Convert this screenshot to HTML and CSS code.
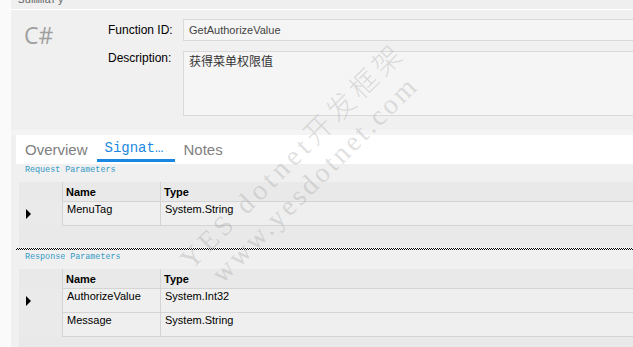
FILE: index.html
```html
<!DOCTYPE html>
<html lang="zh">
<head>
  <meta charset="UTF-8">
  <title>Function Signature</title>
  <link rel="stylesheet" href="styles.css">
</head>
<body>
  <div class="app">
    <div class="summary">
      <div class="group-title"><span>Summary</span></div>
      <div class="summary-body">
        <div class="lang">C#</div>
        <div class="fields">
          <label class="field-label center">Function ID:</label>
          <div class="box">GetAuthorizeValue</div>
          <label class="field-label">Description:</label>
          <div class="box area">获得菜单权限值</div>
        </div>
      </div>
    </div>

    <div class="lower">
      <div class="tabs">
        <div class="tab">Overview</div>
        <div class="tab active">Signat…</div>
        <div class="tab">Notes</div>
      </div>

      <div class="section-label">Request Parameters</div>
      <div class="grid request">
        <div class="row head">
          <div class="rh"></div>
          <div class="cell name">Name</div>
          <div class="cell type">Type</div>
        </div>
        <div class="row">
          <div class="rh"><span class="arrow"></span></div>
          <div class="cell name">MenuTag</div>
          <div class="cell type">System.String</div>
        </div>
      </div>

      <div class="dots"></div>

      <div class="section-label resp">Response Parameters</div>
      <div class="grid response">
        <div class="row head">
          <div class="rh"></div>
          <div class="cell name">Name</div>
          <div class="cell type">Type</div>
        </div>
        <div class="row">
          <div class="rh"><span class="arrow"></span></div>
          <div class="cell name">AuthorizeValue</div>
          <div class="cell type">System.Int32</div>
        </div>
        <div class="row">
          <div class="rh"></div>
          <div class="cell name">Message</div>
          <div class="cell type">System.String</div>
        </div>
      </div>
    </div>
  </div>

  <!-- watermark over the form -->
  <div class="mark mark-1">YES dotnet开发框架</div>
  <div class="mark mark-2">www.yesdotnet.com</div>
</body>
</html>
```

FILE: styles.css
```css
html, body {
  margin: 0;
  height: 100%;
  overflow: hidden;
}

body {
  background-color: #fafafa;
  font-family: "Liberation Sans", Arial, sans-serif;
  position: relative;
}

.app {
  margin-left: 11px;
  height: 347px;
  background-color: #f0f0f0;
  overflow: hidden;
}

/* summary group */
.group-title {
  height: 9px;
  overflow: hidden;
  background-color: #efefef;
  border-bottom: 1px solid #fff;
}

.group-title span {
  display: block;
  margin: -6px 0 0 7px;
  font-family: "Liberation Mono", monospace;
  font-size: 11px;
  line-height: 12px;
  color: #666;
}

.summary-body {
  display: flex;
  padding: 9px 0 14px 13px;
  border-bottom: 5px solid #f4f4f4;
}

.lang {
  width: 84px;
  margin-top: 5px;
  font-family: "Open Sans", sans-serif;
  font-size: 23px;
  line-height: 22px;
  color: #a0a0a0;
}

.fields {
  flex: 1;
  display: grid;
  grid-template-columns: 75px 1fr;
  row-gap: 10px;
  margin-right: -20px;
}

.field-label {
  font-size: 12px;
  line-height: 14px;
  color: #000;
}

.field-label.center {
  align-self: center;
}

.box {
  height: 20px;
  padding-left: 5px;
  border: 1px solid #d9d9d9;
  background-color: #f5f5f5;
  font-size: 11px;
  line-height: 20px;
  color: #444;
}

.box.area {
  height: 61px;
  padding-top: 2px;
  font-family: "Noto Sans CJK SC", sans-serif;
  font-size: 12px;
  line-height: 14px;
  color: #333;
}

/* tabs + parameter grids */
.lower {
  padding-left: 5px;
}

.tabs {
  display: flex;
  height: 29px;
  background-color: #fff;
}

.tab {
  padding: 0 9px 0 9px;
  height: 27px;
  line-height: 29px;
  font-size: 15px;
  color: #808080;
}

.tab.active {
  padding: 0 8px;
  width: 62px;
  height: 24px;
  line-height: 26px;
  font-family: "Liberation Mono", monospace;
  font-size: 14px;
  color: #1a88e0;
  border-bottom: 3px solid #1a88e0;
}

.section-label {
  height: 18px;
  padding-left: 9px;
  font-family: "Liberation Mono", monospace;
  font-size: 8.4px;
  line-height: 12px;
  color: #3399c6;
}

.section-label.resp {
  height: 19px;
  line-height: 14px;
}

.grid {
  margin-left: 3px;
  margin-right: -20px;
  background-color: #e9e9e9;
}

.grid.request {
  height: 65px;
}

.grid.response {
  height: 80px;
}

.row {
  display: flex;
  height: 24px;
}

.row.head {
  height: 20px;
}

.rh {
  width: 43px;
  background-color: #eaeaea;
  display: flex;
  align-items: center;
  padding-left: 7px;
  box-sizing: border-box;
}

.row.head .rh {
  background-color: #e9e9e9;
}

.cell {
  box-sizing: border-box;
  border-left: 1px solid #d4d4d4;
  border-bottom: 1px solid #d4d4d4;
  background-color: #efefef;
  padding: 1px 0 0 4px;
  font-size: 11px;
  line-height: 13px;
  color: #000;
}

.row.head .cell {
  background-color: #e9e9e9;
  font-weight: bold;
  padding: 4px 0 0 3px;
}

.cell.name {
  width: 98px;
}

.cell.type {
  flex: 1;
}

.arrow {
  width: 0;
  height: 0;
  border-top: 5px solid transparent;
  border-bottom: 5px solid transparent;
  border-left: 5px solid #000;
}

.dots {
  height: 2px;
  margin-top: 1px;
  background: repeating-conic-gradient(#000 0 25%, #fff 0 50%) 0 0 / 2px 2px;
}

/* watermark */
.mark {
  position: absolute;
  white-space: nowrap;
  transform-origin: 0 100%;
  transform: rotate(-45deg);
  font-family: "Liberation Serif", "Noto Sans CJK SC", serif;
  font-size: 28px;
  line-height: 28px;
  font-weight: 300;
  color: rgba(150, 150, 150, 0.3);
  pointer-events: none;
}

.mark-1 {
  left: 195px;
  top: 246px;
  letter-spacing: 4.5px;
}

.mark-2 {
  left: 226px;
  top: 260px;
  letter-spacing: 3px;
}
```
